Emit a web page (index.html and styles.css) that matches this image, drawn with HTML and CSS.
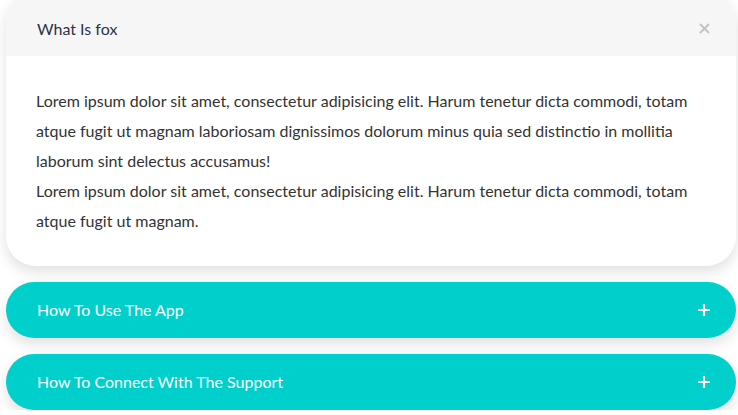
FILE: index.html
```html
<!DOCTYPE html>
<html>
<head>
<meta charset="utf-8">
<link rel="stylesheet" href="styles.css">
</head>
<body>
<div class="faq">
  <div class="card open">
    <div class="card-head">
      <span class="title">What Is fox</span>
      <svg class="icon close" width="11" height="11" viewBox="0 0 11 11"><path d="M1 1L10 10M10 1L1 10" stroke="#c2c2c2" stroke-width="1.8" fill="none"/></svg>
    </div>
    <div class="card-body">
      <p>Lorem ipsum dolor sit amet, consectetur adipisicing elit. Harum tenetur dicta commodi, totam atque fugit ut magnam laboriosam dignissimos dolorum minus quia sed distinctio in mollitia laborum sint delectus accusamus!</p>
      <p>Lorem ipsum dolor sit amet, consectetur adipisicing elit. Harum tenetur dicta commodi, totam atque fugit ut magnam.</p>
    </div>
  </div>
  <div class="card pill">
    <span class="title">How To Use The App</span>
    <svg class="icon" width="12" height="12" viewBox="0 0 12 12"><path d="M6 0V12M0 6H12" stroke="#fff" stroke-width="2.2" fill="none"/></svg>
  </div>
  <div class="card pill">
    <span class="title">How To Connect With The Support</span>
    <svg class="icon" width="12" height="12" viewBox="0 0 12 12"><path d="M6 0V12M0 6H12" stroke="#fff" stroke-width="2.2" fill="none"/></svg>
  </div>
</div>
</body>
</html>
```
FILE: styles.css
```css
html, body {
  margin: 0;
  padding: 0;
  background: #fff;
  overflow: hidden;
}
body {
  font-family: Lato, "Open Sans", sans-serif;
}
.faq {
  display: flex;
  flex-direction: column;
  gap: 16px;
  width: 730px;
  margin: -8px 0 0 6px;
}
.card {
  border-radius: 30px;
  box-shadow: 0 6px 14px rgba(0, 0, 0, 0.12);
}
.open {
  background: #fff;
  overflow: hidden;
}
.card-head {
  display: flex;
  align-items: center;
  justify-content: space-between;
  height: 64px;
  box-sizing: border-box;
  padding: 8px 26px 0 31px;
  background: #f6f6f6;
}
.card-head .title {
  font-size: 16px;
  color: #2b3445;
}
.card-body {
  padding: 30px 30px 30px 30px;
  font-size: 16px;
  line-height: 30px;
  color: #333;
}
.card-body p {
  margin: 0;
}
.pill {
  display: flex;
  align-items: center;
  justify-content: space-between;
  height: 56px;
  border-radius: 28px;
  background: #00cfcb;
  padding: 0 26px 0 31px;
  box-sizing: border-box;
  color: #fff;
  font-size: 16px;
}
.pill .title {
  margin-bottom: 2px;
}
.icon {
  display: block;
}
```
